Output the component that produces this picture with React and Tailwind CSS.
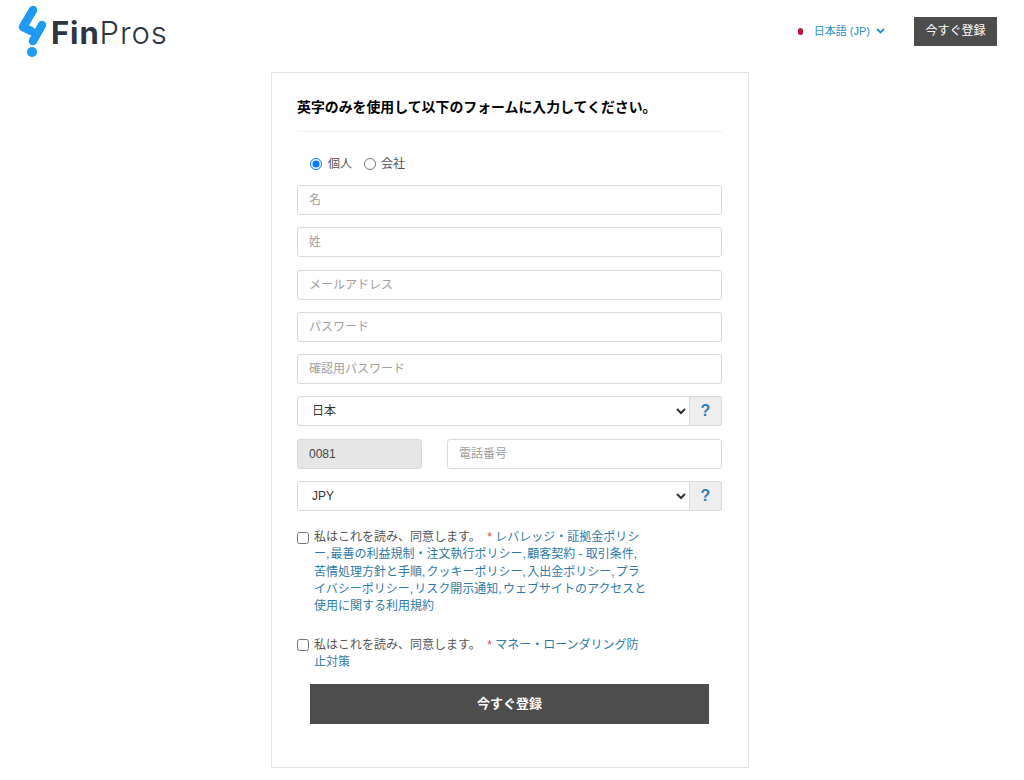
import React from "react";

const font = "font-['Liberation_Sans','Noto_Sans_CJK_JP',sans-serif]";

function Logo() {
    return (
        <div className="flex items-center">
            <svg width="30" height="54" viewBox="0 0 30 54" className="shrink-0">
                <path d="M15 6 L5 23 L13 27" fill="none" stroke="#1e9af0" strokeWidth="8.5" strokeLinecap="round" strokeLinejoin="round" />
                <path d="M24 21 L15 37" fill="none" stroke="#1e9af0" strokeWidth="8.5" strokeLinecap="round" />
                <circle cx="14" cy="48" r="5" fill="#1e9af0" />
            </svg>
            <span className="ml-[3px] mt-[3px] text-[31px] leading-none tracking-[0.9px] text-[#2b3440] font-['Inter',sans-serif]">
                <span className="font-bold">Fin</span>
                <span className="font-light">Pros</span>
            </span>
        </div>
    );
}

function Field({ placeholder }) {
    return (
        <input
            placeholder={placeholder}
            className="block w-full h-[30px] rounded-[3px] border border-[#d6dadd] bg-white px-[11px] text-xs text-[#495057] placeholder:text-[#a0a0a0] outline-none"
        />
    );
}

function SelectRow({ value, options }) {
    return (
        <div className="flex h-[30px]">
            <select
                defaultValue={value}
                className="flex-1 min-w-0 h-full rounded-l-[3px] border border-[#d6dadd] bg-white pl-[10px] text-xs text-[#333] outline-none"
            >
                {options.map((o) => (
                    <option key={o}>{o}</option>
                ))}
            </select>
            <div className="w-[32px] h-full flex items-center justify-center rounded-r-[3px] border border-l-0 border-[#d6dadd] bg-[#eeeeee] text-base font-bold text-[#337ab7]">
                ?
            </div>
        </div>
    );
}

function Agreement({ links, className }) {
    return (
        <label className={`flex items-start text-xs leading-[17.3px] text-[#555] ${className}`}>
            <input type="checkbox" className="w-[12px] h-[12px] mt-[2.5px] mr-[5px] shrink-0" />
            <span className="w-[334px]">
                私はこれを読み、同意します。 <span className="ml-[3px] text-[#e0444c]">*</span>{" "}
                <span className="text-[#2f7aa8]">
                    {links.map((link, i) => (
                        <React.Fragment key={link}>
                            {i > 0 && <span className="tracking-[1.2px]">,</span>}
                            <a>{link}</a>
                        </React.Fragment>
                    ))}
                </span>
            </span>
        </label>
    );
}

const policies = [
    "レバレッジ・証拠金ポリシー",
    "最善の利益規制・注文執行ポリシー",
    "顧客契約 - 取引条件",
    "苦情処理方針と手順",
    "クッキーポリシー",
    "入出金ポリシー",
    "プライバシーポリシー",
    "リスク開示通知",
    "ウェブサイトのアクセスと使用に関する利用規約",
];

export default function App() {
    return (
        <div className={`min-h-[780px] bg-white ${font}`}>
            <header className="flex items-center justify-between h-[72px] pl-[18px] pr-[27px] pb-[10px]">
                <Logo />
                <div className="flex items-center">
                    <span className="w-[5px] h-[7px] rounded-full bg-[#c4103a] mr-[11px] -ml-[1px]" />
                    <span className="text-[11px] text-[#2a8fc7]">日本語 (JP)</span>
                    <svg width="9" height="6" viewBox="0 0 9 6" className="ml-[6px]">
                        <path d="M1 1 L4.5 4.5 L8 1" fill="none" stroke="#2a8fc7" strokeWidth="1.8" />
                    </svg>
                    <button className="ml-[29px] w-[83px] h-[29px] bg-[#4d4d4d] text-xs text-white">今すぐ登録</button>
                </div>
            </header>

            <main className="ml-[271px] w-[478px] h-[696px] border border-[#e3e3e3] pl-[25px] pr-[26px]">
                <h1 className="pt-[26px] pb-[15px] text-[13.9px] leading-[17px] font-bold text-black border-b border-[#f0f0f0]">
                    英字のみを使用して以下のフォームに入力してください。
                </h1>

                <div className="flex items-center h-[17px] mt-[23px] ml-[13px] text-xs text-[#555]">
                    <input type="radio" name="kind" defaultChecked className="w-[12px] h-[12px] m-0" />
                    <span className="ml-[6px]">個人</span>
                    <input type="radio" name="kind" className="w-[12px] h-[12px] m-0 ml-[12px]" />
                    <span className="ml-[5px]">会社</span>
                </div>

                <div className="flex flex-col gap-[12.3px] mt-[13px]">
                    <Field placeholder="名" />
                    <Field placeholder="姓" />
                    <Field placeholder="メールアドレス" />
                    <Field placeholder="パスワード" />
                    <Field placeholder="確認用パスワード" />
                    <SelectRow value="日本" options={["日本"]} />
                    <div className="flex gap-[25px]">
                        <input
                            readOnly
                            value="0081"
                            className="w-[125px] shrink-0 h-[30px] rounded-[3px] border border-[#d6dadd] bg-[#e6e6e6] px-[11px] text-xs text-[#444] outline-none"
                        />
                        <Field placeholder="電話番号" />
                    </div>
                    <SelectRow value="JPY" options={["JPY"]} />
                </div>

                <Agreement className="mt-[18px]" links={policies} />
                <Agreement className="mt-[21px]" links={["マネー・ローンダリング防止対策"]} />

                <button className="block ml-[13px] mt-[13px] w-[399px] h-[40px] bg-[#4d4d4d] text-[13px] font-bold text-white">
                    今すぐ登録
                </button>
            </main>
        </div>
    );
}
